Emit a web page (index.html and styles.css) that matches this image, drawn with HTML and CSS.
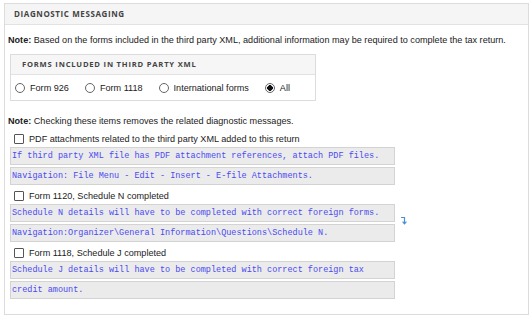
FILE: index.html
```html
<!DOCTYPE html>
<html lang="en">
<head>
    <meta charset="UTF-8">
    <title>Diagnostic Messaging</title>
    <link rel="stylesheet" href="styles.css">
</head>
<body>
    <div class="panel">
        <div class="panel-header">Diagnostic Messaging</div>
        <div class="panel-body">
            <p class="note"><b>Note:</b> Based on the forms included in the third party XML, additional information may be required to complete the tax return.</p>

            <div class="forms-box">
                <div class="forms-header">Forms included in third party XML</div>
                <div class="forms-row">
                    <label class="radio"><input type="radio" name="forms"> Form 926</label>
                    <label class="radio"><input type="radio" name="forms"> Form 1118</label>
                    <label class="radio"><input type="radio" name="forms"> International forms</label>
                    <label class="radio"><input type="radio" name="forms" checked> All</label>
                </div>
            </div>

            <p class="note note-second"><b>Note:</b> Checking these items removes the related diagnostic messages.</p>

            <div class="item">
                <label class="check"><input type="checkbox"> PDF attachments related to the third party XML added to this return</label>
                <div class="msg">If third party XML file has PDF attachment references, attach PDF files.</div>
                <div class="msg">Navigation: File Menu - Edit - Insert - E-file Attachments.</div>
            </div>

            <div class="item">
                <label class="check"><input type="checkbox"> Form 1120, Schedule N completed</label>
                <div class="msg">Schedule N details will have to be completed with correct foreign forms.</div>
                <div class="msg">Navigation:Organizer\General Information\Questions\Schedule N.</div>
                <svg class="cursor-mark" width="7" height="9" viewBox="0 0 7 9">
                    <path d="M1 1.5 H4.5 V7.5" fill="none" stroke="#4a8fd6" stroke-width="1.2"/>
                    <path d="M2.6 5.6 L4.5 7.8 L6.4 5.6" fill="none" stroke="#4a8fd6" stroke-width="1.2"/>
                </svg>
            </div>

            <div class="item">
                <label class="check"><input type="checkbox"> Form 1118, Schedule J completed</label>
                <div class="msg">Schedule J details will have to be completed with correct foreign tax</div>
                <div class="msg">credit amount.</div>
            </div>
        </div>
    </div>
</body>
</html>
```

FILE: styles.css
```css
body {
    margin: 0;
    padding: 3px 0 0 4px;
    font-family: 'Liberation Sans', Arial, sans-serif;
    font-size: 9.1px;
    color: #222;
    background: #fff;
}
.panel {
    width: 523px;
    height: 310px;
    border: 1px solid #dcdcdc;
}
.panel-header {
    height: 20px;
    line-height: 20px;
    padding-left: 9px;
    background-color: #f5f5f5;
    border-bottom: 1px solid #e2e2e2;
    font-family: 'Open Sans', sans-serif;
    font-weight: bold;
    font-size: 8px;
    letter-spacing: 0.6px;
    text-transform: uppercase;
    color: #444;
}
.panel-body {
    padding: 8px 3px 0 3px;
}
.note {
    margin: 0;
    line-height: 14px;
}
.note b {
    font-weight: bold;
}
.forms-box {
    width: 304px;
    margin: 7px 0 0 2px;
    border: 1px solid #dcdcdc;
}
.forms-header {
    height: 19px;
    line-height: 19px;
    padding-left: 11px;
    background-color: #f6f6f6;
    border-bottom: 1px solid #e2e2e2;
    font-family: 'Open Sans', sans-serif;
    font-weight: bold;
    font-size: 7.6px;
    letter-spacing: 0.8px;
    text-transform: uppercase;
    color: #444;
}
.forms-row {
    display: flex;
    align-items: center;
    gap: 16px;
    height: 25px;
    padding-left: 4px;
}
.radio, .check {
    display: flex;
    align-items: center;
    gap: 5px;
}
input[type="radio"], input[type="checkbox"] {
    appearance: none;
    margin: 0;
    width: 10px;
    height: 10px;
    border: 1px solid #666;
    background: #fff;
}
input[type="radio"] {
    border-radius: 50%;
}
input[type="radio"]:checked {
    background: radial-gradient(circle, #111 0 2.6px, #fff 3px);
}
input[type="checkbox"] {
    border-radius: 1px;
    border-color: #555;
}
.note-second {
    margin-top: 13px;
}
.item {
    position: relative;
    display: flex;
    flex-direction: column;
    gap: 2px;
    margin-top: 3px;
}
.item:first-of-type {
    margin-top: 6px;
}
.check {
    height: 15px;
    padding-left: 6px;
    margin-bottom: -1px;
}
.msg {
    width: 382px;
    height: 16px;
    line-height: 16px;
    margin-left: 2px;
    padding-left: 1px;
    background-color: #ebebeb;
    border: 1px solid #d3d3d3;
    font-family: 'Liberation Mono', 'Courier New', monospace;
    font-size: 8.5px;
    color: #4a4af0;
    white-space: nowrap;
}
.cursor-mark {
    position: absolute;
    left: 392px;
    top: 28px;
}
```
